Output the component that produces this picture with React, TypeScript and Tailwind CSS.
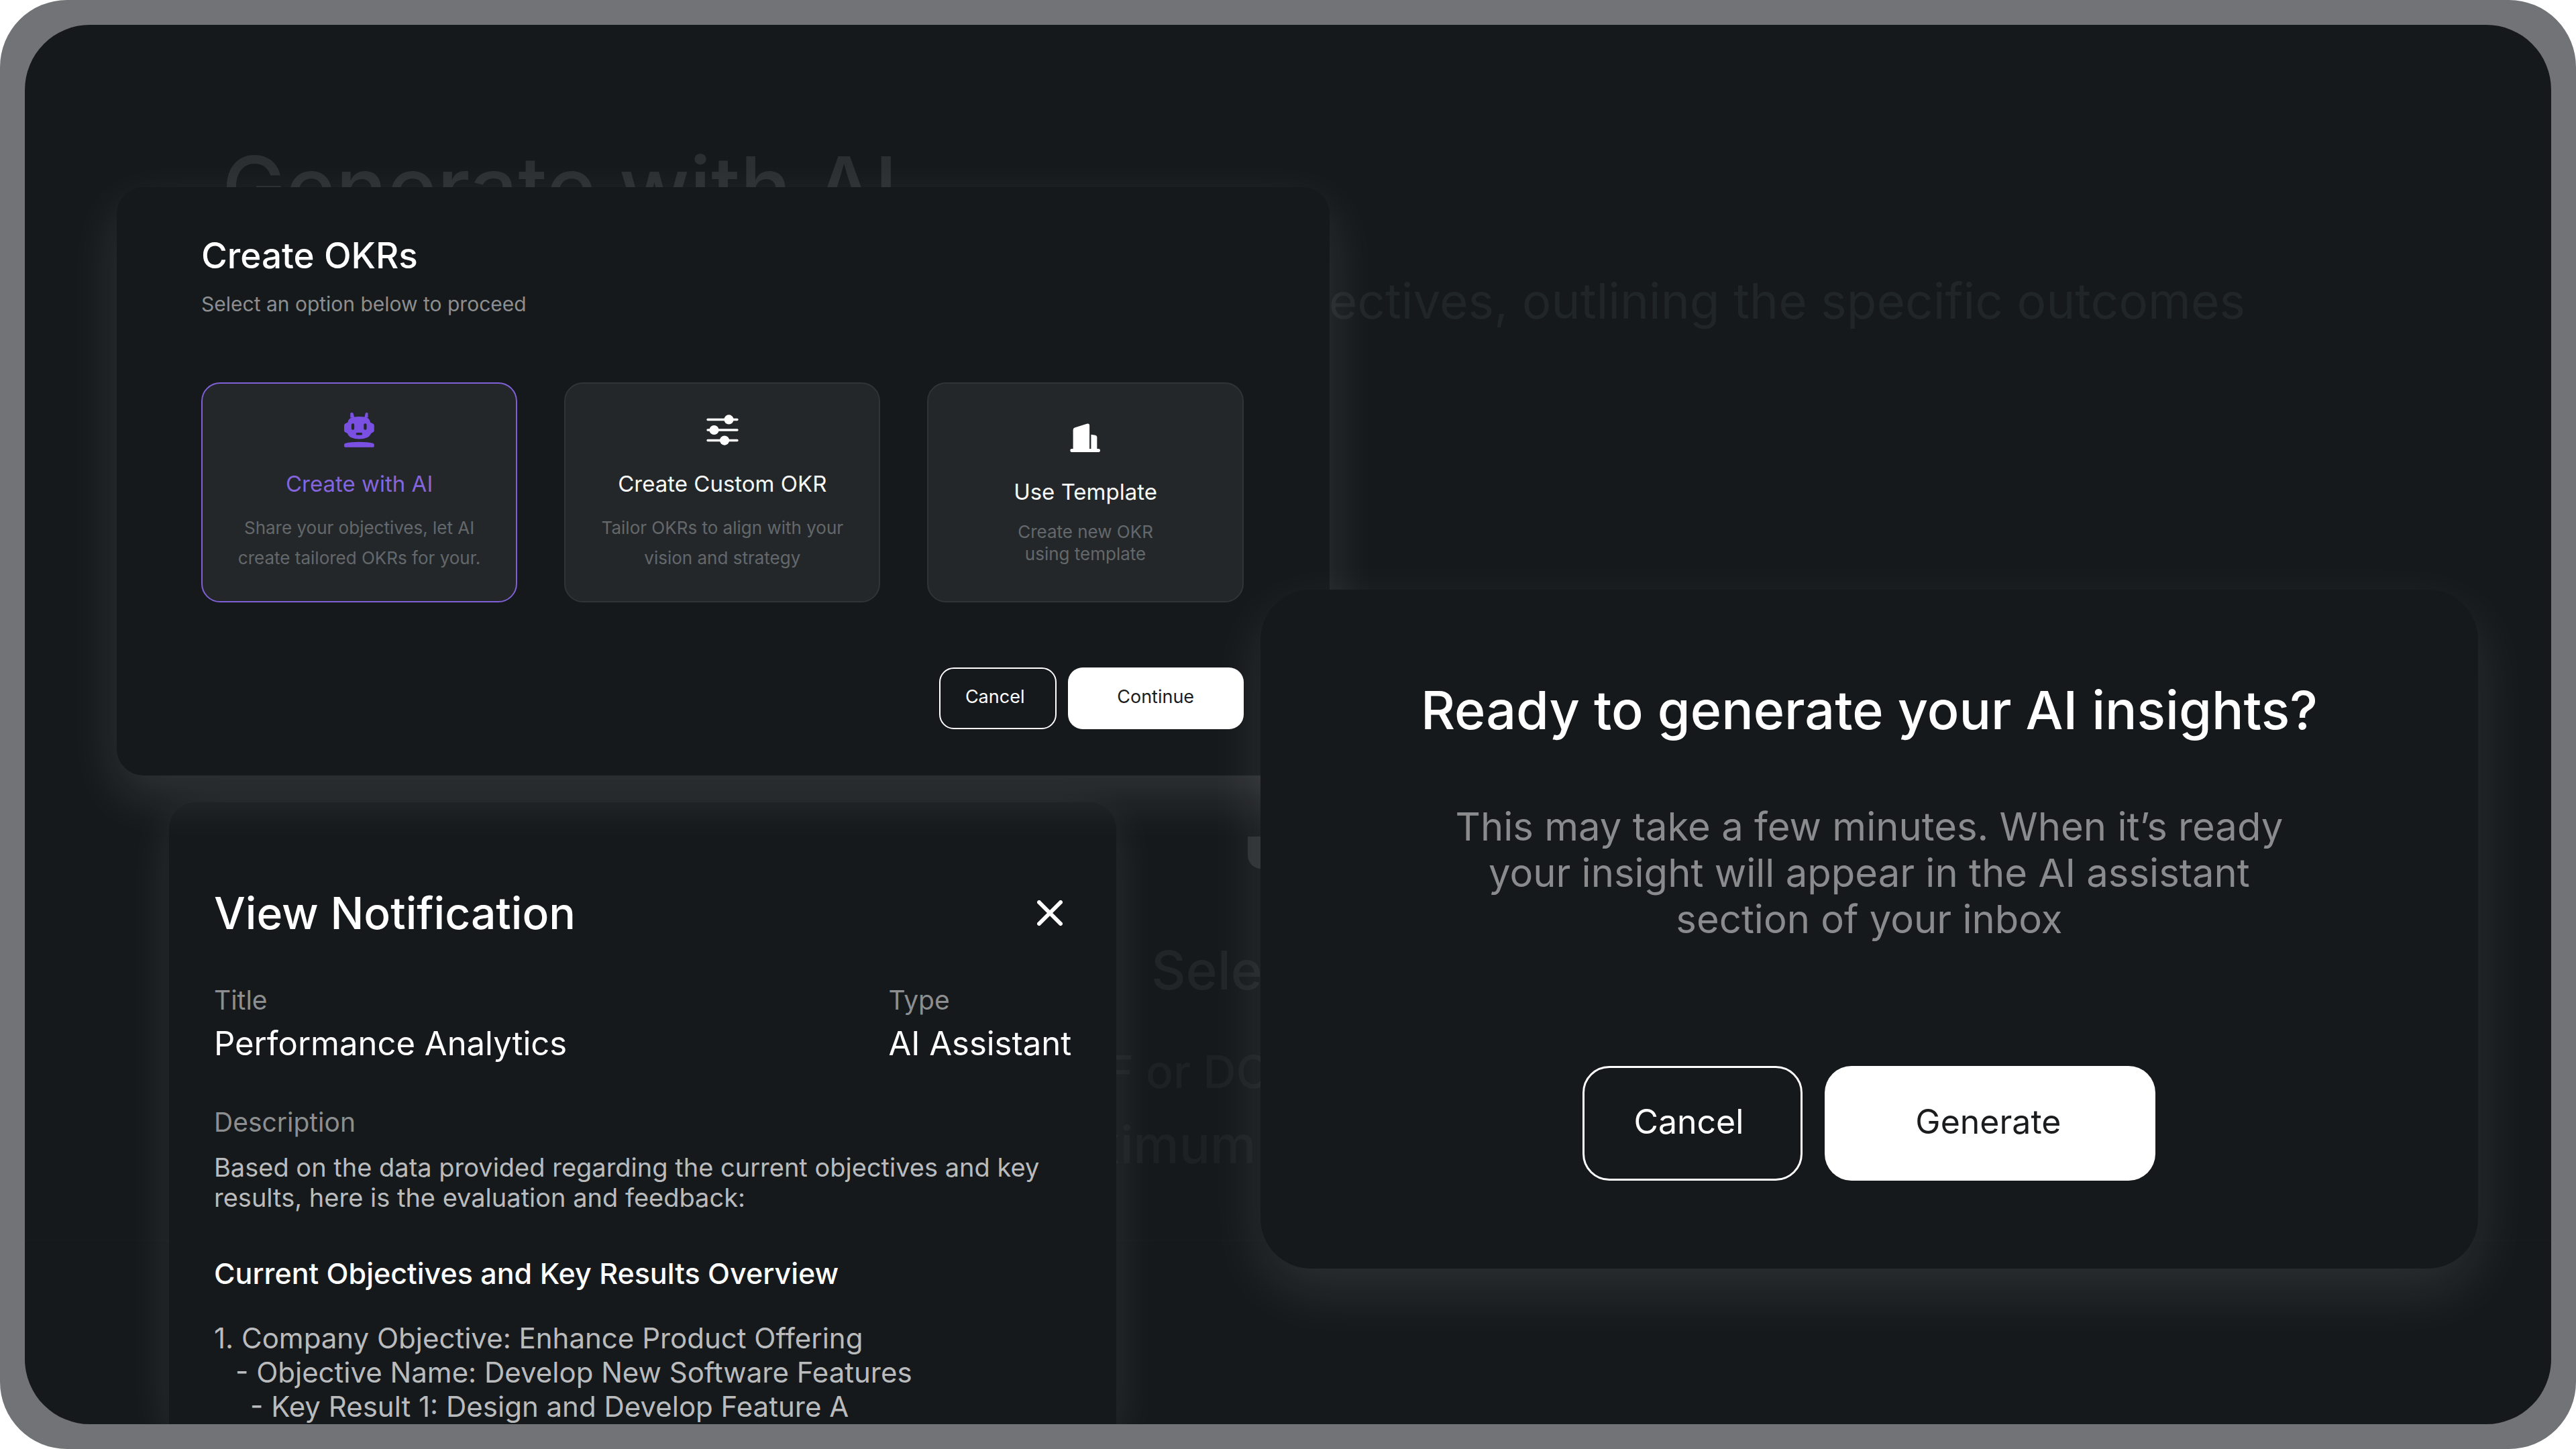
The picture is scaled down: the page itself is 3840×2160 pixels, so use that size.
import React from 'react';
import clsx from 'clsx';

type OptionCardProps = {
  icon: React.ReactNode;
  title: string;
  lines: string[];
  selected?: boolean;
  compact?: boolean;
};

type FieldProps = {
  label: string;
  value: string;
};

const RobotIcon: React.FC = () => (
  <svg viewBox="698 200 136 158" className="h-[52px]" aria-hidden="true">
    <g fill="#7a50e2">
      <path d="M726 205q0-5 5-5h3q5 0 6 5l4 18h-18zM790 223l4-18q1-5 5-5h2q5 0 5 5v18z" />
      <path d="M726 226q8-8 40-8t40 8q8 5 11 19l10 4q7 3 7 9v24q0 5-6 8l-8 4q-6 14-18 19-16 7-36 7t-36-7q-12-5-17-19l-9-4q-6-3-6-8v-24q0-6 6-9l10-4q3-14 12-19z" />
      <path d="M698 346q0-6 6-7 26-6 62-6t62 6q6 1 6 7v6q0 5-5 5H703q-5 0-5-5z" />
    </g>
    <g fill="#23272a">
      <rect x="731" y="249" width="13" height="29" rx="6" />
      <rect x="787" y="249" width="13" height="29" rx="6" />
      <rect x="752" y="291" width="28" height="11" rx="4" />
    </g>
  </svg>
);

const SlidersIcon: React.FC = () => (
  <svg viewBox="700 207 142 136" className="h-[46px]" aria-hidden="true">
    <path d="M706 229H836M706 275H836M706 321H836" stroke="white" strokeWidth="10" strokeLinecap="round" />
    <g fill="white">
      <circle cx="799" cy="229" r="21" />
      <circle cx="734" cy="275" r="21" />
      <circle cx="780" cy="321" r="21" />
    </g>
  </svg>
);

const BuildingIcon: React.FC = () => (
  <svg viewBox="704 251 137 130" className="h-[43px]" aria-hidden="true">
    <g fill="white">
      <path d="M718 368V281q0-8 7-10l55-18q12-3 12 8v107z" />
      <path d="M799 368v-66l19 3q8 2 8 9v54z" />
      <rect x="705" y="366" width="135" height="15" rx="7" />
    </g>
  </svg>
);

const OptionCard: React.FC<OptionCardProps> = ({ icon, title, lines, selected, compact }) => (
  <button
    type="button"
    aria-pressed={!!selected}
    className={clsx(
      'flex h-[328px] flex-col items-center justify-center rounded-[28px] border-2 bg-[#23272a]',
      selected ? 'border-[#7f60d6]' : 'border-[#303437]'
    )}
  >
    <span className="flex h-[52px] items-center">{icon}</span>
    <span
      className={clsx(
        'mt-[34px] text-[33px] leading-[40px]',
        selected ? 'text-[#8565dc]' : 'text-[#f8fafa]'
      )}
    >
      {title}
    </span>
    <span
      className={clsx(
        'mt-[23px] text-[26px] text-[#64686a]',
        compact ? 'leading-[33px]' : 'leading-[45px]'
      )}
    >
      {lines.map(line => (
        <span key={line} className="block">
          {line}
        </span>
      ))}
    </span>
  </button>
);

const CreateOkrsDialog: React.FC = () => (
  <section
    role="dialog"
    aria-label="Create OKRs"
    className="absolute top-[242px] left-[137px] w-[48%] rounded-[40px] bg-[#15191c] pt-[70px] pr-[128px] pb-[69px] pl-[126px] shadow-[0_30px_80px_rgba(255,255,255,0.12)]"
  >
    <h2 className="text-[53px] leading-[64px] font-medium text-white">Create OKRs</h2>
    <p className="mt-[20px] text-[30px] leading-[40px] text-[#8c8e8f]">
      Select an option below to proceed
    </p>
    <div className="mt-[97px] grid grid-cols-3 gap-[70px]">
      <OptionCard
        selected
        icon={<RobotIcon />}
        title="Create with AI"
        lines={['Share your objectives, let AI', 'create tailored OKRs for your.']}
      />
      <OptionCard
        icon={<SlidersIcon />}
        title="Create Custom OKR"
        lines={['Tailor OKRs to align with your', 'vision and strategy']}
      />
      <OptionCard
        compact
        icon={<BuildingIcon />}
        title="Use Template"
        lines={['Create new OKR', 'using template']}
      />
    </div>
    <div className="mt-[97px] flex justify-end gap-[17px] text-[27px]">
      <button
        type="button"
        className="h-[92px] w-[175px] rounded-[22px] border-2 border-white pr-[8px] pb-[4px] text-white"
      >
        Cancel
      </button>
      <button
        type="button"
        className="h-[92px] w-[262px] rounded-[22px] bg-white pb-[4px] text-[#1b1c1e]"
      >
        Continue
      </button>
    </div>
  </section>
);

const Field: React.FC<FieldProps> = ({ label, value }) => (
  <div>
    <dt className="text-[39px] leading-[48px] text-[#8c8e8f]">{label}</dt>
    <dd className="mt-[13px] text-[49px] leading-[56px] text-white">{value}</dd>
  </div>
);

const NotificationDialog: React.FC = () => (
  <section
    role="dialog"
    aria-label="View Notification"
    className="absolute top-[1159px] bottom-0 left-[215px] w-[37.5%] overflow-hidden rounded-t-[40px] bg-[#15191c] px-[67px] pt-[125px] shadow-[0_20px_70px_rgba(255,255,255,0.1)]"
  >
    <div className="flex items-center justify-between">
      <h2 className="text-[66px] leading-[80px] font-medium text-white">View Notification</h2>
      <button type="button" aria-label="Close" className="flex size-[64px] items-center justify-center">
        <svg viewBox="0 0 38 38" className="size-[38px]" aria-hidden="true">
          <path d="M3 3l32 32M35 3L3 35" stroke="white" strokeWidth="6" strokeLinecap="round" />
        </svg>
      </button>
    </div>
    <dl className="mt-[66px] flex justify-between">
      <Field label="Title" value="Performance Analytics" />
      <Field label="Type" value="AI Assistant" />
    </dl>
    <h3 className="mt-[65px] text-[39px] leading-[48px] text-[#8c8e8f]">Description</h3>
    <p className="mt-[21px] text-[38px] leading-[45px] text-[#b9bbbc]">
      Based on the data provided regarding the current objectives and key results, here is the
      evaluation and feedback:
    </p>
    <h3 className="mt-[65px] text-[43px] leading-[51px] font-medium text-white">
      Current Objectives and Key Results Overview
    </h3>
    <ul className="mt-[45px] text-[42px] leading-[51px] text-[#b9bbbc]">
      <li>1. Company Objective: Enhance Product Offering</li>
      <li className="pl-[32px]">- Objective Name: Develop New Software Features</li>
      <li className="pl-[54px]">- Key Result 1: Design and Develop Feature A</li>
    </ul>
  </section>
);

const InsightsDialog: React.FC = () => (
  <section
    role="dialog"
    aria-label="Generate AI insights"
    className="absolute top-[842px] right-[109px] flex w-[48.2%] flex-col items-center rounded-[75px] bg-[#15191c] pt-[134px] pb-[131px] text-center shadow-[0_32px_88px_rgba(255,255,255,0.1)]"
  >
    <h2 className="text-[79px] leading-[90px] font-medium text-white">
      Ready to generate your AI insights?
    </h2>
    <p className="mt-[95px] max-w-[1300px] text-[58px] leading-[69px] text-[#8a8b8c]">
      This may take a few minutes. When it’s ready your insight will appear in the AI assistant
      section of your inbox
    </p>
    <div className="mt-[184px] flex gap-[33px] text-[50px]">
      <button
        type="button"
        className="h-[171px] w-[328px] rounded-[40px] border-[3px] border-white pr-[12px] pb-[4px] text-white"
      >
        Cancel
      </button>
      <button
        type="button"
        className="h-[171px] w-[493px] rounded-[40px] bg-white pr-[6px] pb-[4px] text-[#1b1c1e]"
      >
        Generate
      </button>
    </div>
  </section>
);

// Dimmed page that stays behind the open dialogs
const GeneratePage: React.FC = () => (
  <div className="pt-[172px]">
    <h1 className="pl-[294px] text-[127px] leading-[140px] font-medium text-[#2b2f31]">
      Generate with AI
    </h1>
    <p className="mt-[60px] pr-[456px] text-right text-[73px] leading-[80px] text-[#202528]">
      objectives, outlining the specific outcomes
    </p>
    <div className="flex flex-col items-start border-b-2 border-[#171b1e] pt-[758px] pb-[92px]">
      <span className="ml-[1823px] block h-[48px] w-[120px] rounded-b-[20px] bg-[#2b2f31]" />
      <p className="mt-[101px] pl-[1679px] text-[80px] leading-[100px] font-medium text-[#212528]">
        Select
      </p>
      <p className="mt-[51px] pl-[1520px] text-[68px] leading-[100px] font-medium text-[#1d2124]">
        PDF or DOC
      </p>
      <p className="mt-[9px] pl-[1476px] text-[77px] leading-[100px] font-medium text-[#1d2124]">
        Maximum
      </p>
    </div>
  </div>
);

const App: React.FC = () => {
  return (
    <div className="bg-white font-[Inter,sans-serif]">
      <div className="flex h-screen rounded-[100px] bg-[#727376] p-[37px]">
        <main className="relative flex-1 overflow-hidden rounded-[97px] bg-[#15191c]">
          <GeneratePage />
          <NotificationDialog />
          <CreateOkrsDialog />
          <InsightsDialog />
        </main>
      </div>
    </div>
  );
};

export default App;
